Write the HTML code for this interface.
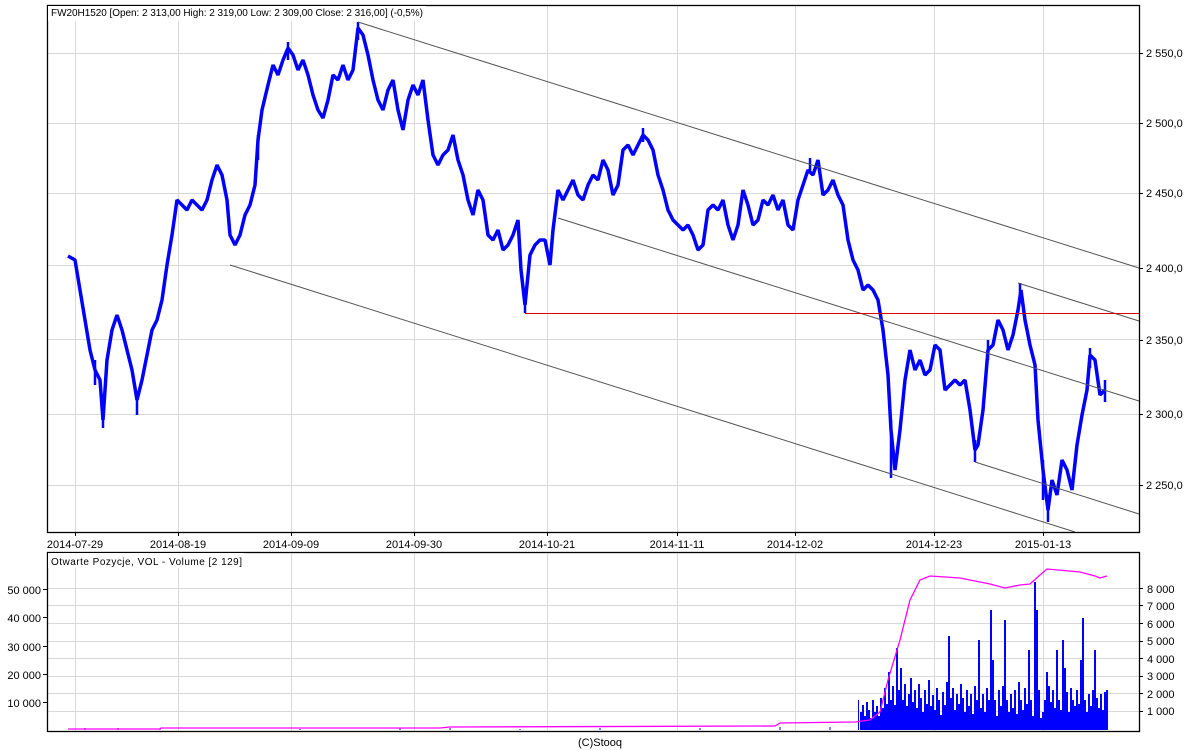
<!DOCTYPE html>
<html><head><meta charset="utf-8"><style>
html,body{margin:0;padding:0;background:#fff;}
svg{display:block;font-family:"Liberation Sans",Arial,sans-serif;font-size:10px;}
</style></head><body>
<svg width="1200" height="750" viewBox="0 0 1200 750" xmlns="http://www.w3.org/2000/svg">
<rect width="1200" height="750" fill="#fff"/>
<g stroke="#d8d8d8" stroke-width="1">
<line x1="75.5" y1="5" x2="75.5" y2="532"/><line x1="178.5" y1="5" x2="178.5" y2="532"/><line x1="291.5" y1="5" x2="291.5" y2="532"/><line x1="414.5" y1="5" x2="414.5" y2="532"/><line x1="547.5" y1="5" x2="547.5" y2="532"/><line x1="677.5" y1="5" x2="677.5" y2="532"/><line x1="795.5" y1="5" x2="795.5" y2="532"/><line x1="934.5" y1="5" x2="934.5" y2="532"/><line x1="1043.5" y1="5" x2="1043.5" y2="532"/>
<line x1="47" y1="53.5" x2="1139" y2="53.5"/><line x1="47" y1="123.5" x2="1139" y2="123.5"/><line x1="47" y1="193.5" x2="1139" y2="193.5"/><line x1="47" y1="265.5" x2="1139" y2="265.5"/><line x1="47" y1="339.5" x2="1139" y2="339.5"/><line x1="47" y1="414.5" x2="1139" y2="414.5"/><line x1="47" y1="485.5" x2="1139" y2="485.5"/>
<line x1="75.5" y1="552" x2="75.5" y2="732"/><line x1="178.5" y1="552" x2="178.5" y2="732"/><line x1="291.5" y1="552" x2="291.5" y2="732"/><line x1="414.5" y1="552" x2="414.5" y2="732"/><line x1="547.5" y1="552" x2="547.5" y2="732"/><line x1="677.5" y1="552" x2="677.5" y2="732"/><line x1="795.5" y1="552" x2="795.5" y2="732"/><line x1="934.5" y1="552" x2="934.5" y2="732"/><line x1="1043.5" y1="552" x2="1043.5" y2="732"/>
<line x1="47" y1="588.5" x2="1139" y2="588.5"/><line x1="47" y1="605.5" x2="1139" y2="605.5"/><line x1="47" y1="623.5" x2="1139" y2="623.5"/><line x1="47" y1="641.5" x2="1139" y2="641.5"/><line x1="47" y1="658.5" x2="1139" y2="658.5"/><line x1="47" y1="676.5" x2="1139" y2="676.5"/><line x1="47" y1="693.5" x2="1139" y2="693.5"/><line x1="47" y1="711.5" x2="1139" y2="711.5"/>
</g>
<polyline fill="none" stroke="#0000ff" stroke-width="3.5" stroke-linejoin="bevel" points="68,256 75,260 80,290 85,320 90,350 95,370 100,380 103,420 107,360 112,330 117,315 122,330 127,350 132,370 137,400 142,380 147,355 152,330 157,320 162,300 167,265 172,235 177,200 182,205 187,210 192,200 197,205 202,210 207,200 212,180 217,165 222,175 227,200 230,235 235,245 240,235 245,215 250,205 255,185 258,140 262,110 268,85 273,65 278,75 283,60 288,48 293,55 298,70 303,60 308,75 313,95 318,110 323,118 328,100 333,75 338,80 343,65 348,80 353,70 358,28 363,35 368,55 373,80 378,100 383,110 388,90 393,80 398,110 403,130 408,100 413,85 418,95 423,80 428,120 433,155 438,165 443,155 448,150 453,135 458,160 463,175 468,200 473,215 478,190 483,200 488,235 493,240 498,230 503,250 508,245 513,235 518,220 521,270 525,305 530,255 535,245 540,240 545,240 550,265 553,230 558,190 563,200 568,190 573,180 578,195 583,200 588,185 593,175 598,180 603,160 608,170 613,195 618,185 623,150 628,145 633,155 638,145 643,135 648,140 653,150 658,175 663,190 668,210 673,220 678,225 683,230 688,225 693,235 698,250 703,245 708,210 713,205 718,210 723,200 728,225 733,240 738,225 743,190 748,205 753,225 758,220 763,200 768,205 773,195 778,210 783,200 788,225 793,230 798,200 803,185 808,170 813,175 818,160 823,195 828,190 833,180 838,195 843,205 848,240 853,260 858,270 863,290 868,285 873,290 878,300 883,330 888,375 891,430 895,470 900,430 905,380 910,350 915,370 920,360 925,375 930,370 935,345 940,350 945,390 950,385 955,380 960,385 965,380 970,410 975,450 978,445 983,410 988,350 993,345 998,320 1003,330 1008,350 1013,335 1018,310 1021,290 1025,320 1030,345 1035,365 1038,420 1043,470 1048,510 1052,480 1057,495 1062,460 1067,470 1072,490 1077,445 1082,415 1087,390 1090,355 1095,360 1100,395 1105,390"/>
<g stroke="#0000ff" stroke-width="2.5">
<path d="M103,410V428M137,395V415M95,360V385M258,135V160M288,42V60M358,22V40M525,290V313M891,420V478M1048,495V522M1043,460V500M1020,283V300M810,158V172M643,128V142M1090,348V368M1105,380V402M975,440V462M988,340V360"/>
</g>
<g stroke="#555" stroke-width="1" fill="none">
<line x1="358" y1="22" x2="1139" y2="268"/>
<line x1="230" y1="265" x2="1075" y2="532"/>
<line x1="558" y1="218" x2="1139" y2="401"/>
<line x1="1018" y1="283" x2="1139" y2="321"/>
<line x1="975" y1="462" x2="1139" y2="514"/>
</g>
<line x1="525" y1="313.5" x2="1139" y2="313.5" stroke="#e00000" stroke-width="1"/>
<path fill="none" stroke="#0000ff" stroke-width="1" d="M85,730V728M118,730V728M160,730V729M300,730V729M400,730V728M450,730V728M520,730V729M600,730V728M700,730V728M780,730V727M830,730V727M858.5,730V700"/>
<path fill="none" stroke="#0000ff" stroke-width="2" d="M861,730V712M863,730V705M865,730V716M867,730V702M869,730V710M871,730V718M873,730V700M875,730V712M877,730V706M879,730V716M881,730V698M883,730V708M885,730V688M887,730V704M889,730V672M891,730V700M893,730V686M895,730V705M897,730V648M899,730V690M901,730V668M903,730V700M905,730V684M907,730V706M909,730V694M911,730V678M913,730V702M915,730V690M917,730V708M919,730V684M921,730V698M923,730V712M925,730V690M927,730V704M929,730V680M931,730V706M933,730V695M935,730V710M937,730V688M939,730V700M941,730V715M943,730V692M945,730V705M947,730V682M949,730V636M951,730V698M953,730V688M955,730V710M957,730V694M959,730V704M961,730V684M963,730V698M965,730V712M967,730V690M969,730V706M971,730V694M973,730V714M975,730V686M977,730V700M979,730V640M981,730V708M983,730V694M985,730V712M987,730V688M989,730V700M991,730V610M993,730V660M995,730V700M997,730V716M999,730V690M1001,730V706M1003,730V686M1005,730V620M1007,730V700M1009,730V712M1011,730V694M1013,730V708M1015,730V690M1017,730V714M1019,730V682M1021,730V700M1023,730V710M1025,730V688M1027,730V704M1029,730V650M1031,730V700M1033,730V716M1035,730V582M1037,730V610M1039,730V690M1041,730V718M1043,730V712M1045,730V700M1047,730V672M1049,730V686M1051,730V702M1053,730V690M1055,730V708M1057,730V650M1059,730V700M1061,730V710M1063,730V640M1065,730V668M1067,730V692M1069,730V712M1071,730V688M1073,730V700M1075,730V706M1077,730V690M1079,730V704M1081,730V660M1083,730V618M1085,730V700M1087,730V712M1089,730V694M1091,730V706M1093,730V690M1095,730V650M1097,730V698M1099,730V708M1101,730V694M1103,730V710M1105,730V692M1107,730V690"/>
<polyline fill="none" stroke="#ff00ff" stroke-width="1.3" points="68,729 160,729 161,728 440,728 450,727 775,726 780,723 855,722 870,720 880,712 888,680 900,640 910,600 920,580 930,576 960,578 990,584 1005,588 1020,585 1030,584 1040,575 1047,569 1080,572 1095,576 1100,578 1107,576"/>
<rect x="47.5" y="5.5" width="1092" height="527" fill="none" stroke="#000" stroke-width="1.3"/>
<rect x="47.5" y="552.5" width="1092" height="179" fill="none" stroke="#000" stroke-width="1.3"/>
<rect x="48" y="6" width="378" height="15" fill="#fff"/>
<text x="51" y="16" fill="#000" textLength="372">FW20H1520 [Open: 2 313,00  High: 2 319,00  Low: 2 309,00  Close: 2 316,00] (-0,5%)</text>
<rect x="48" y="553" width="196" height="15" fill="#fff"/>
<text x="51" y="565" fill="#000" textLength="191">Otwarte Pozycje, VOL - Volume [2 129]</text>
<g fill="#000" font-size="11">
<text x="1146" y="57">2 550,0</text><text x="1146" y="127">2 500,0</text><text x="1146" y="197">2 450,0</text><text x="1146" y="272">2 400,0</text><text x="1146" y="344">2 350,0</text><text x="1146" y="418">2 300,0</text><text x="1146" y="489">2 250,0</text>
<text x="1147" y="593">8 000</text><text x="1147" y="610">7 000</text><text x="1147" y="628">6 000</text><text x="1147" y="645">5 000</text><text x="1147" y="663">4 000</text><text x="1147" y="680">3 000</text><text x="1147" y="698">2 000</text><text x="1147" y="715">1 000</text>
<g text-anchor="end"><text x="41" y="594">50 000</text><text x="41" y="622">40 000</text><text x="41" y="651">30 000</text><text x="41" y="679">20 000</text><text x="41" y="707">10 000</text></g>
<g text-anchor="middle"><text x="75" y="548">2014-07-29</text><text x="178" y="548">2014-08-19</text><text x="291" y="548">2014-09-09</text><text x="414" y="548">2014-09-30</text><text x="547" y="548">2014-10-21</text><text x="677" y="548">2014-11-11</text><text x="795" y="548">2014-12-02</text><text x="934" y="548">2014-12-23</text><text x="1043" y="548">2015-01-13</text>
<text x="600" y="746">(C)Stooq</text></g>
</g>
<g stroke="#000" stroke-width="1">
<line x1="1139" y1="53.5" x2="1143" y2="53.5"/><line x1="1139" y1="123.5" x2="1143" y2="123.5"/><line x1="1139" y1="193.5" x2="1143" y2="193.5"/><line x1="1139" y1="268.5" x2="1143" y2="268.5"/><line x1="1139" y1="340.5" x2="1143" y2="340.5"/><line x1="1139" y1="414.5" x2="1143" y2="414.5"/><line x1="1139" y1="485.5" x2="1143" y2="485.5"/>
<line x1="75.5" y1="532" x2="75.5" y2="536"/><line x1="178.5" y1="532" x2="178.5" y2="536"/><line x1="291.5" y1="532" x2="291.5" y2="536"/><line x1="414.5" y1="532" x2="414.5" y2="536"/><line x1="547.5" y1="532" x2="547.5" y2="536"/><line x1="677.5" y1="532" x2="677.5" y2="536"/><line x1="795.5" y1="532" x2="795.5" y2="536"/><line x1="934.5" y1="532" x2="934.5" y2="536"/><line x1="1043.5" y1="532" x2="1043.5" y2="536"/>
<line x1="1139" y1="588.5" x2="1143" y2="588.5"/><line x1="1139" y1="605.5" x2="1143" y2="605.5"/><line x1="1139" y1="623.5" x2="1143" y2="623.5"/><line x1="1139" y1="641.5" x2="1143" y2="641.5"/><line x1="1139" y1="658.5" x2="1143" y2="658.5"/><line x1="1139" y1="676.5" x2="1143" y2="676.5"/><line x1="1139" y1="693.5" x2="1143" y2="693.5"/><line x1="1139" y1="711.5" x2="1143" y2="711.5"/>
<line x1="43" y1="589.5" x2="47" y2="589.5"/><line x1="43" y1="617.5" x2="47" y2="617.5"/><line x1="43" y1="646.5" x2="47" y2="646.5"/><line x1="43" y1="674.5" x2="47" y2="674.5"/><line x1="43" y1="702.5" x2="47" y2="702.5"/>
</g>
</svg>
</body></html>
